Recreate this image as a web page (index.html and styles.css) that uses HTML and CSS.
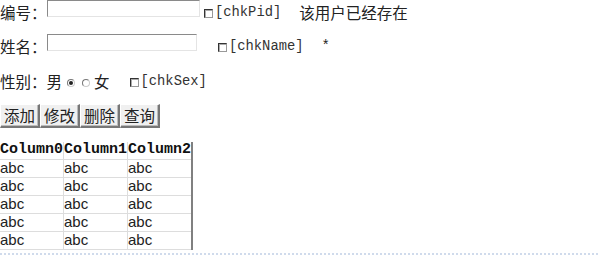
FILE: index.html
```html
<!DOCTYPE html>
<html>
<head>
<meta charset="utf-8">
<link rel="stylesheet" href="styles.css">
</head>
<body>
<div class="page">
  <div class="row row1">
    <span class="label">编号：</span><span class="input w153"></span><span class="chk gap4"></span><span class="mono">[chkPid]</span><span class="msg">该用户已经存在</span>
  </div>
  <div class="row row2">
    <span class="label">姓名：</span><span class="input w150"></span><span class="chk gap21"></span><span class="mono">[chkName]</span><span class="star">*</span>
  </div>
  <div class="row row3">
    <span class="label">性别：男</span><span class="radio checked"></span><span class="radio"></span><span class="cjk">女</span><span class="chk gap20"></span><span class="mono">[chkSex]</span>
  </div>
  <div class="buttons">
    <span class="btn">添加</span><span class="btn">修改</span><span class="btn">删除</span><span class="btn">查询</span>
  </div>
  <table class="grid">
    <tr class="head"><th>Column0</th><th>Column1</th><th>Column2</th></tr>
    <tr><td>abc</td><td>abc</td><td>abc</td></tr>
    <tr><td>abc</td><td>abc</td><td>abc</td></tr>
    <tr><td>abc</td><td>abc</td><td>abc</td></tr>
    <tr><td>abc</td><td>abc</td><td>abc</td></tr>
    <tr><td>abc</td><td>abc</td><td>abc</td></tr>
  </table>
  <div class="dotline"></div>
</div>
</body>
</html>
```

FILE: styles.css
```css
html, body {
  margin: 0;
  padding: 0;
  background: #fff;
}
body {
  font-family: "Noto Sans CJK SC", sans-serif;
  font-size: 15.5px;
  color: #222;
  width: 598px;
  height: 255px;
  overflow: hidden;
}
.page {
  display: flex;
  flex-direction: column;
  align-items: flex-start;
}
.row {
  display: flex;
  align-items: center;
  height: 20px;
  white-space: nowrap;
  line-height: 20px;
}
.row1 { margin-top: 2px; }
.row2 { margin-top: 14px; }
.row3 { margin-top: 15px; }
.label {
  width: 47px;
}
.row3 .label { width: auto; }
.input {
  display: inline-block;
  height: 15px;
  border-top: 1px solid #8a8a8a;
  border-left: 1px solid #8a8a8a;
  border-bottom: 1px solid #e4e4e4;
  border-right: 1px solid #e4e4e4;
  align-self: flex-start;
  margin-top: -2px;
}
.w153 { width: 151px; }
.w150 { width: 148px; }
.chk {
  display: inline-block;
  width: 7px;
  height: 7px;
  border-top: 1px solid #333;
  border-left: 1px solid #333;
  border-bottom: 1px solid #999;
  border-right: 1px solid #999;
  box-shadow: inset 1px 1px 0 #aaa;
  margin-right: 2px;
  margin-top: 3px;
}
.gap4 { margin-left: 4px; }
.gap21 { margin-left: 21px; }
.gap20 { margin-left: 20px; }
.mono {
  font-family: "Liberation Mono", monospace;
  font-size: 13.8px;
  color: #333;
  position: relative;
  top: 1px;
}
.msg { margin-left: 18px; }
.star {
  margin-left: 18px;
  font-family: "Liberation Mono", monospace;
  font-size: 14px;
}
.cjk { margin-left: 2px; }
.radio {
  display: inline-block;
  width: 6px;
  height: 6px;
  border: 1px solid #777;
  border-right-color: #ccc;
  border-bottom-color: #ccc;
  border-radius: 50%;
  margin-left: 5px;
  margin-right: 2px;
  margin-top: 3px;
  position: relative;
}
.radio.checked::after {
  content: "";
  position: absolute;
  left: 1px;
  top: 1px;
  width: 4px;
  height: 4px;
  border-radius: 50%;
  background: #222;
}
.buttons {
  display: flex;
  margin-top: 13px;
}
.btn {
  display: inline-block;
  height: 21px;
  line-height: 21px;
  padding: 0 3px;
  background: #f0f0f0;
  border-top: 1px solid #fff;
  border-left: 1px solid #fff;
  border-right: 2px solid #777;
  border-bottom: 2px solid #777;
  box-shadow: inset -1px -1px 0 #bbb;
  font-size: 15.5px;
  color: #222;
}
.grid {
  margin-top: 14px;
  border-collapse: collapse;
  border-right: 2px solid #808080;
}
.grid tr { height: 18px; }
.grid tr.head { height: 17px; }
.grid th, .grid td {
  padding: 0;
  text-align: left;
  border-right: 1px solid #ddd;
  border-bottom: 1px solid #ddd;
  line-height: 16px;
  width: 62px;
}
.grid th {
  font-family: "Liberation Mono", monospace;
  font-weight: bold;
  font-size: 15px;
  color: #111;
}
.grid td {
  font-family: "Liberation Sans", sans-serif;
  font-size: 15px;
  color: #222;
}
.dotline {
  align-self: stretch;
  margin-top: 3px;
  height: 0;
  border-top: 2px dotted #d0dbec;
}
```
